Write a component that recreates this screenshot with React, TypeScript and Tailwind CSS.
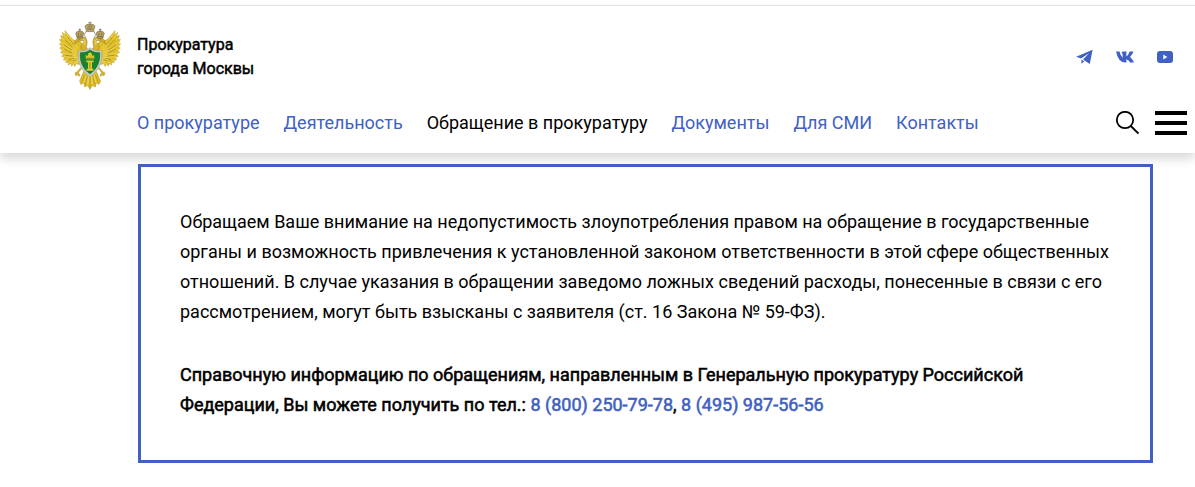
import React from 'react';

interface NavItem {
  title: string;
  href: string;
  active?: boolean;
}

const navItems: NavItem[] = [
  { title: 'О прокуратуре', href: '#about' },
  { title: 'Деятельность', href: '#activity' },
  { title: 'Обращение в прокуратуру', href: '#appeal', active: true },
  { title: 'Документы', href: '#documents' },
  { title: 'Для СМИ', href: '#media' },
  { title: 'Контакты', href: '#contacts' },
];

function Wing() {
  return (
    <g>
      <path
        d="M97 92 L83 79 L77 85 L68 80 L56 67 L44 53 L46 67 L36 58 L39 72 L31 68 L35 82 L28 79 L34 93 L27 93 L35 103 L28 106 L37 114 L30 119 L40 125 L34 131 L44 135 L39 142 L49 143 L46 150 L55 149 L54 157 L63 153 L64 161 L71 155 L74 162 L79 153 L87 156 L98 146 Z"
        fill="#e0be1f"
        stroke="#b99d35"
        strokeWidth="1.5"
      />
      <path
        d="M46 60 L86 107 M38 64 L84 111 M34 75 L82 115 M31 86 L80 119 M31 96 L80 123 M33 108 L80 127 M35 120 L80 131 M40 132 L82 135 M46 142 L84 139 M56 151 L86 143 M67 156 L88 147"
        fill="none"
        stroke="#f0dc78"
        strokeWidth="2"
      />
      <path
        d="M52 74 L72 96 M44 81 L67 103 M41 96 L65 112 M42 110 L66 121 M46 128 L67 130 M55 142 L72 137 M68 146 L79 140"
        fill="none"
        stroke="#a48b25"
        strokeWidth="2.5"
      />
      {/* neck and head */}
      <path
        d="M106 118 C92 112 88 102 97 94 C106 88 101 82 93 83 L80 86 L74 94 L75 83 L84 75 C99 69 112 75 111 89 C111 98 105 101 114 111 Z"
        fill="#d6b32a"
        stroke="#9b8340"
        strokeWidth="2"
      />
      <path d="M99 79 C107 83 106 92 101 97" fill="none" stroke="#f3df72" strokeWidth="3" />
      <path d="M86 79 L90 79" stroke="#62542d" strokeWidth="2" />
      {/* side crown */}
      <path d="M81 76 L77 61 C79 52 99 52 101 61 L97 76 Z" fill="#b5a164" stroke="#75683f" strokeWidth="2" />
      <path d="M89 47 V57 M85 50 H93 M81 71 H97 M85 60 L85 68 M93 60 L93 68" stroke="#6b603f" strokeWidth="2" />
    </g>
  );
}

function Emblem() {
  return (
    <svg viewBox="26 22 188 210" className="h-[70px] w-[62px]" role="img" aria-label="Эмблема прокуратуры">
      {/* tail */}
      <path
        d="M101 177 L139 177 L152 207 L147 216 L139 211 L136 224 L127 219 L120 231 L113 219 L104 224 L101 211 L92 216 L89 205 Z"
        fill="#e0be26"
        stroke="#b6982e"
        strokeWidth="2"
      />
      <path d="M112 190 L105 218 M120 190 V226 M128 190 L135 218 M103 188 L96 209 M137 188 L145 209" stroke="#a98e28" strokeWidth="2" />
      <path d="M108 190 L101 212 M116 190 L113 216 M124 190 L127 216 M132 190 L139 212" stroke="#f7e788" strokeWidth="2" />
      <path d="M94 166 L82 180 L74 184 M82 180 L78 190 M82 180 L89 191 M146 166 L158 180 L166 184 M158 180 L162 190 M158 180 L151 191" fill="none" stroke="#cfae35" strokeWidth="6" />
      <Wing />
      <g transform="matrix(-1 0 0 1 240 0)">
        <Wing />
      </g>
      {/* ribbons and central crown */}
      <path d="M109 53 L103 66 L109 78 M131 53 L137 66 L131 78" fill="none" stroke="#aaa393" strokeWidth="3" />
      <path d="M110 56 L105 40 C107 31 133 31 135 40 L130 56 Z" fill="#bdaa6a" stroke="#776a42" strokeWidth="2" />
      <path d="M120 25 V36 M115 29 H125 M111 49 H129 M115 37 L114 47 M120 36 V48 M125 37 L126 47" stroke="#746745" strokeWidth="2" />
      {/* shield */}
      <path d="M120 105 C109 114 97 116 85 114 C80 146 93 176 120 193 C147 176 160 146 155 114 C143 116 131 114 120 105 Z" fill="#c9cbc5" stroke="#a4a8a1" strokeWidth="2" />
      <path d="M120 112 C111 119 101 121 91 120 C88 145 99 170 120 184 C141 170 152 145 149 120 C139 121 129 119 120 112 Z" fill="#16852d" stroke="#096a20" strokeWidth="2" />
      <path d="M107 127 L113 130 L115 122 L120 119 L125 122 L127 130 L133 127 V140 H107 Z" fill="#ddc52d" />
      <path d="M109 144 H131 V149 H126 V169 H130 V175 H110 V169 H114 V149 H109 Z" fill="#e4cc32" />
      <path d="M107 137 H133 M120 149 V169" stroke="#655e1e" strokeWidth="2" />
    </svg>
  );
}

export default function App() {
  return (
    <div className="bg-white pt-[5px] font-[Roboto,sans-serif] text-black">
      <header className="flex border-t border-[#e2e2e2] pr-2 pb-[18px] pl-[59px] shadow-[0_6px_10px_rgba(0,0,0,0.15)]">
        <a href="#home" className="mt-[14px] mr-4 shrink-0" aria-label="На главную">
          <Emblem />
        </a>

        <div className="flex-1">
          <div className="flex items-center justify-between pt-[27px] pr-[14px]">
            <a href="#home" className="text-base leading-6 [-webkit-text-stroke:0.03em]">
              Прокуратура
              <br />
              города Москвы
            </a>
            <div className="flex items-center gap-[23px] text-[#4060c4]">
              <a href="#telegram" aria-label="Telegram">
                <svg viewBox="0 0 18 16" className="h-4 w-[18px]" fill="currentColor">
                  <path d="M17.6 .8 L1.2 7.8 L6 9.6 L14 4.2 L8 10.4 L14.8 15 Z M6.4 10.4 V14.8 L9.2 12.4 Z" />
                </svg>
              </a>
              <a href="#vk" aria-label="ВКонтакте">
                <svg viewBox="0 0 18 12" className="h-3 w-[18px]" fill="currentColor">
                  <path d="M0 .5 H3.5 Q4.6 5 6.6 6.8 V3.4 Q6.6 1.8 5.3 1.4 Q6.1 .5 8 .5 H10.4 V5.4 Q12.4 4.2 13.6 .5 H17.5 Q16.6 3.6 14 6 Q16.8 8 18 11.6 H14.2 Q12.8 8.9 10.4 8.2 V11.6 H9.4 Q2.2 11.6 0 .5 Z" />
                </svg>
              </a>
              <a href="#youtube" aria-label="YouTube">
                <svg viewBox="0 0 16 12" className="h-3 w-4" fill="currentColor">
                  <path fillRule="evenodd" d="M3 0 Q8 -.5 13 0 Q16 0 16 3 V9 Q16 12 13 12 H3 Q0 12 0 9 V3 Q0 0 3 0 Z M6.3 3.6 V8.4 L10.3 6 Z" />
                </svg>
              </a>
            </div>
          </div>

          <div className="mt-[30px] flex h-6 items-center justify-between">
            <nav className="flex gap-6 text-lg leading-6 whitespace-nowrap">
              {navItems.map((item) => (
                <a key={item.href} href={item.href} className={item.active ? 'text-black' : 'text-[#4060c4]'}>
                  {item.title}
                </a>
              ))}
            </nav>
            <div className="flex items-center gap-4">
              <button type="button" aria-label="Поиск">
                <svg viewBox="0 0 24 24" className="h-6 w-6" fill="none" stroke="currentColor" strokeWidth="1.8">
                  <circle cx="10" cy="9" r="8.2" />
                  <path d="M15.8 15 L23.5 22.5" />
                </svg>
              </button>
              <button type="button" aria-label="Меню" className="flex w-8 flex-col gap-1.5">
                <span className="h-1 w-full bg-black" />
                <span className="h-1 w-full bg-black" />
                <span className="h-1 w-full bg-black" />
              </button>
            </div>
          </div>
        </div>
      </header>

      <main className="pt-[11px] pr-[42px] pb-6 pl-[138px]">
        <section className="border-3 border-[#4060c4] px-[39px] py-10 text-lg leading-[30px]">
          <p>
            Обращаем Ваше внимание на недопустимость злоупотребления правом на обращение в государственные органы и
            возможность привлечения к установленной законом ответственности в этой сфере общественных отношений. В
            случае указания в обращении заведомо ложных сведений расходы, понесенные в связи с его рассмотрением, могут
            быть взысканы с заявителя (ст. 16 Закона № 59-ФЗ).
          </p>
          <p className="mt-[33px] [-webkit-text-stroke:0.03em]">
            Справочную информацию по обращениям, направленным в Генеральную прокуратуру Российской Федерации, Вы можете
            получить по тел.:{' '}
            <a href="tel:88002507978" className="text-[#4060c4]">
              8 (800) 250-79-78
            </a>
            ,{' '}
            <a href="tel:84959875656" className="text-[#4060c4]">
              8 (495) 987-56-56
            </a>
          </p>
        </section>
      </main>
    </div>
  );
}
